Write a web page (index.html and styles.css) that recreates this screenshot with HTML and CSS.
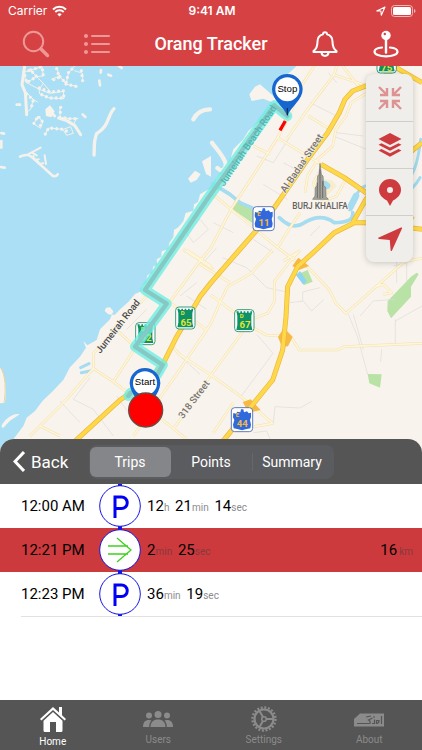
FILE: index.html
```html
<!DOCTYPE html>
<html lang="en">
<head>
<meta charset="UTF-8" />
<meta name="viewport" content="width=device-width, initial-scale=1" />
<title>Orang Tracker</title>
<link rel="stylesheet" href="styles.css">
</head>
<body>
  <header class="topbar">
    <div class="status">
      <div class="carrier">Carrier
        <svg width="15" height="12" viewBox="0 0 15 12" fill="none" stroke="#fff" stroke-width="2"><path d="M1 4.500a9.200 9.200 0 0 1 13 0M3.300 7a6 6 0 0 1 8.400 0"/><path d="M7.500 11.500 5.300 9.200a3.200 3.200 0 0 1 4.400 0z" fill="#fff" stroke="none"/></svg>
      </div>
      <div class="clock">9:41 AM</div>
      <div class="battery">
        <svg width="10" height="10" viewBox="0 0 10 10" fill="none" stroke="#fff" stroke-width="1.100" stroke-linejoin="round"><path d="M.8 4.900 9 1 5.300 9.300 4.900 5z"/></svg>
        <svg width="25" height="12" viewBox="0 0 25 12"><rect x=".5" y=".5" width="21" height="11" rx="3" fill="none" stroke="#f0b5b5"/><rect x="2" y="2" width="18" height="8" rx="1.500" fill="#fff"/><path d="M23 4c2 .7 2 3.300 0 4z" fill="#f0b5b5"/></svg>
      </div>
    </div>
    <nav class="navbar">
      <div class="nav-group">
        <button type="button" class="icon-btn faded" aria-label="Search">
          <svg width="28" height="28" viewBox="0 0 28 28" fill="none" stroke="currentColor"><circle cx="11.500" cy="11.500" r="9.700" stroke-width="2"/><path d="m19 19 6.500 6.500" stroke-width="3.400" stroke-linecap="round"/></svg>
        </button>
        <button type="button" class="icon-btn faded" aria-label="List">
          <svg width="28" height="28" viewBox="0 0 28 28" fill="none" stroke="currentColor" stroke-width="2" stroke-linecap="round"><path d="M9 6h17M9 14h17M9 22h17"/><g fill="currentColor" stroke="none"><circle cx="3" cy="6" r="2"/><circle cx="3" cy="14" r="2"/><circle cx="3" cy="22" r="2"/></g></svg>
        </button>
      </div>
      <h1 class="title">Orang Tracker</h1>
      <div class="nav-group nav-right">
        <button type="button" class="icon-btn" aria-label="Notifications">
          <svg width="28" height="28" viewBox="0 0 28 28" fill="none" stroke="currentColor" stroke-width="2" stroke-linecap="round" stroke-linejoin="round"><path d="M12 4.300a2 2 0 1 1 4 0c3.700 1 5.500 4 5.500 7.200 0 5.500 1 7.500 4 9.500v1h-23v-1c3-2 4-4 4-9.500C6.500 8.300 8.300 5.300 12 4.300z"/><path d="M10.500 22.500c.3 4.500 6.700 4.500 7 0"/></svg>
        </button>
        <button type="button" class="icon-btn" aria-label="Track position">
          <svg width="28" height="28" viewBox="0 0 28 28" fill="none" stroke="currentColor"><circle cx="14" cy="5.500" r="4.700" fill="currentColor" stroke="none"/><circle cx="12.800" cy="4" r="1.200" fill="#d64244" stroke="none"/><path d="M14 9v13.500" stroke-width="2.400" stroke-linecap="round"/><path d="M10 17.500c-4.500.4-7.500 2-7.500 4.200 0 2.700 5 4.600 11.500 4.600s11.500-1.900 11.500-4.600c0-2.200-3-3.800-7.500-4.200" stroke-width="2.200" stroke-linecap="round"/></svg>
        </button>
      </div>
    </nav>
  </header>

  <section class="map" aria-label="Map">
    <svg class="map-canvas" viewBox="0 0 1266 1167" preserveAspectRatio="xMidYMin slice">
      <defs>
        <g id="d-road">
          <rect x="-29" y="-33" width="58" height="66" rx="10" fill="#fff" stroke="#3a9b7d" stroke-width="3"/>
          <path d="M-24-28h7v4h5v-4h5v4h5v-4h5v4h5v-4h5v4h5v-4h6l-3 14v28l3 14h-48l3-14v-28z" fill="#0d9166"/>
        </g>
        <g id="e-road">
          <rect x="-32" y="-36" width="64" height="72" rx="10" fill="#fff" stroke="#6079b8" stroke-width="3"/>
          <path d="M-26-20l8 2 4-6 9 2 2-9h7l2 9 9-3 5 6 7-2v14l-3 8 3 14-2 11-14 3L0 32l-11-3-14-3-2-11 4-14-4-8z" fill="#3069dc"/>
        </g>
      </defs>

      <rect width="1266" height="1167" fill="#abdff5"/>

      <!-- mainland -->
      <path class="land" d="M890 0 866 22 842 50 846 108 820 110 790 98 755 105 748 85 765 62 780 55 820 90 834 108 800 140 785 160 745 195 730 220 700 250 690 285 668 320 650 335 641 365 622 372 600 385 594 408 582 415 580 434 557 441 550 466 535 484 522 492 520 514 508 530 505 550 485 556 484 572 470 580 472 597 459 602 457 620 442 628 438 650 426 660 424 676 405 684 385 708 362 728 345 746 325 745 314 735 318 725 330 724 340 736 330 760 300 790 290 822 262 838 250 825 258 845 240 872 210 904 190 942 158 976 128 1004 105 1035 80 1055 70 1080 40 1120 10 1167H1266V0z"/>

      <!-- islands -->
      <g class="land-line">
        <path stroke-width="13" d="M636 230c14 20 36 40 42 66-4 22-16 20-26 10M580 160c10-20 30-30 50-30"/>
        <path stroke-width="10" d="M342 128c-20 20-12 50-52 75-10 24-6 42-8 64"/>
        <path stroke-width="8" d="M60 272c20-10 30-5 40 5l58 52c10 4 12 0 15-4"/>
        <path stroke-width="6" d="M84 265l38-20M100 270l4 12 12-2M112 285l6 9 12-2M134 268l4 26M96 260l14 8"/>
        <path stroke-width="9" d="M74 0 66 56l10 24 4 66M144 130l20 20M176 156l24 8 24 14 18 28"/>
        <path stroke-width="3" d="M72 18l20-6 18 20-30 18zM92 12l34-10 4 28-20 2M110 32l20 20-12 18-38-20M118 70l32 12 40-6 2 22-44-2-28-12zM80 80l20 20-8 30-14 10M100 100l12 8M130 52l24 28M170 4l8 26-24 10M178 30l20 24 8-34 18-20M198 54l34 8M224 14l24 8v22M102 172l12-22 14 18-6 18zM136 204l10-18 44 4 22-8 8 20-20 6-10-16M180 124v30l30 4M210 158l24 0M222 172l8-16"/>
        <path stroke-width="10" stroke-dasharray="0 15" d="M72 18l20-6 18 20-30 18zM92 12l34-10 4 28M118 66l32 12 40-4 2 22-44 0-28-12M80 84l20 18-8 30M170 8l8 26-24 10M180 32l18 20 8-34 18-16M198 54l34 8M244 14l4 30M102 172l12-22 14 18-12 18M136 204l10-18 44 4 22 12M182 124l-2 30 30 4 24 0"/>
        <path stroke-width="8" d="M248 145l8 8M50 116h10M303 12l-1 8M298 44l2 14M325 26l8 3M357 0l8 6M4 225v20M4 201l8 2M2 303l12 2M150 130l0 8"/>
      </g>
      <path class="land" d="M564 338 585 314 602 324 590 342 572 350zM606 286 633 270 633 332 618 324zM136 130 150 118 164 136 154 154 138 150zM0 905c16 20 20 60 15 105l-15 2zM4 1080c10-20 35-40 55-35l-30 20-20 22z"/>
      <path d="M4 905q18 40 8 108" fill="none" stroke="#f0d49a" stroke-width="3"/>

      <!-- parks and inland water -->
      <g fill="#b8e2a6">
        <path d="M703 405 758 430V472L698 430zM1163 705 1233 632 1250 620 1256 625 1233 662V692L1173 757 1162 735zM1103 924 1145 925 1140 965 1108 952zM888 627 923 612 938 647 913 657z"/>
        <path d="M955 345q40-15 55 15l-35 35z" fill="#f7edcc"/>
      </g>
      <path d="M888 627 900 615 920 646 910 656z" fill="#8fd4f0"/>
      <g fill="none" stroke="#a5dcf0" stroke-linecap="round" stroke-linejoin="round">
        <path stroke-width="11" d="M636 352 690 385 720 410 755 425M838 455q40 40 75 15 50-30 90 0 60 0 55-30"/>
        <path stroke-width="20" d="M1050 425 1068 390M975 355l6 4"/>
        <path stroke-width="9" d="M1068 390q10-24 28-30M1210 385q30-15 50-50M1232 330q20-25 30-110M242 905l25-12M244 920l30-6"/>
      </g>

      <!-- lanes -->
      <g class="lane">
        <path d="M640 360 700 290M770 270 820 290 868 215M790 355 862 400M905 320 850 290M930 110 1010 150M1000 210 1100 250M1010 200 1090 210M668 575 740 605 800 665 870 680M870 710 910 705 935 735 972 700M908 705V678L960 665M1045 745 1072 810 1103 925M1060 745 1090 850M1080 750 1120 705 1185 700M1186 760V840M1145 850 1142 888M1186 765 1266 720M770 805 819 862 724 990M820 1070 825 1022 900 1026 935 1006M400 1060 350 990M270 935 220 1000 280 1030 340 1110M180 1005 240 1070M380 790 440 730M540 870 600 925M560 690 620 730M540 690 590 650M1145 560 1190 540V650M1180 600 1220 590V650M760 1100 800 1095 815 1130"/>
        <path d="M560 500 600 460 625 490 580 530zM550 550 610 590 650 545M640 470 700 500M760 520 820 560M930 510l30-30M985 20l25 30"/>
      </g>

      <!-- secondary roads -->
      <g class="road-case">
        <path d="M943 0 905 58 868 150 833 215 693 430 633 545 595 592 400 855 340 947M833 215 963 295M1010 0 1003 25 923 130 860 220M998 25 1103 60M1028 0 1083 70M1103 80 1053 110 1038 150 1008 190 998 240 953 280 923 330 915 380M925 150 990 190M550 550 640 610M760 240 810 265M958 320 940 350 960 410 1010 390 1040 335"/>
        <path d="M633 380 693 430 773 495 833 545 893 590 923 602 988 672 1008 712 1038 742 1128 662 1213 587 1266 577M633 687 693 732 763 787 798 807 873 812 898 852 1013 852 1033 842 1266 832M818 552 753 622 683 662 663 702 633 772 540 910 440 1052 400 1110M900 552 873 582 823 647 823 707 803 742 763 757M728 797 633 927 520 1090M540 867 633 927 723 992 818 1072 763 1082M633 600 560 552M600 595 690 650M700 1010 640 1100M450 680 280 862 280 907 200 1000 90 1110M280 907 340 947 450 1032 560 1120M500 702 620 792 600 822M350 792 405 842M520 845 540 867M833 545 860 500 900 440M120 1080 180 1110M890 560 850 585M1128 662 1150 655 1175 680 1150 685"/>
      </g>
      <g class="road">
        <path d="M943 0 905 58 868 150 833 215 693 430 633 545 595 592 400 855 340 947M833 215 963 295M1010 0 1003 25 923 130 860 220M998 25 1103 60M1028 0 1083 70M1103 80 1053 110 1038 150 1008 190 998 240 953 280 923 330 915 380M925 150 990 190M550 550 640 610M760 240 810 265M958 320 940 350 960 410 1010 390 1040 335"/>
        <path d="M633 380 693 430 773 495 833 545 893 590 923 602 988 672 1008 712 1038 742 1128 662 1213 587 1266 577M633 687 693 732 763 787 798 807 873 812 898 852 1013 852 1033 842 1266 832M818 552 753 622 683 662 663 702 633 772 540 910 440 1052 400 1110M900 552 873 582 823 647 823 707 803 742 763 757M728 797 633 927 520 1090M540 867 633 927 723 992 818 1072 763 1082M633 600 560 552M600 595 690 650M700 1010 640 1100M450 680 280 862 280 907 200 1000 90 1110M280 907 340 947 450 1032 560 1120M500 702 620 792 600 822M350 792 405 842M520 845 540 867M833 545 860 500 900 440M120 1080 180 1110M890 560 850 585M1128 662 1150 655 1175 680 1150 685"/>
      </g>

      <!-- highways -->
      <path d="M852 785l-18 28 12 30 18-2 14-28zM752 1000l-24 8 18 32 36-8zM895 575l-18 25 20 12 30-12z" fill="#f7b944"/>
      <g class="highway-case">
        <path d="M218 1132 360 1002 390 982 440 950 490 892 530 812 600 692 633 650 718 552 768 495 823 425 923 280 983 200 1018 140 1035 100 1058 75 1103 58 1150 35 1190 0M963 295 1033 335 1098 380 1240 460M1058 470 1098 400 1180 300 1266 230M1180 0 1266 50"/>
        <path d="M665 1130 753 1022 818 942 848 852 858 752 863 662 893 602 948 552 1003 500 1063 470 1110 470 1266 490"/>
      </g>
      <g class="highway">
        <path d="M218 1132 360 1002 390 982 440 950 490 892 530 812 600 692 633 650 718 552 768 495 823 425 923 280 983 200 1018 140 1035 100 1058 75 1103 58 1150 35 1190 0M963 295 1033 335 1098 380 1240 460M1058 470 1098 400 1180 300 1266 230M1180 0 1266 50"/>
        <path d="M665 1130 753 1022 818 942 848 852 858 752 863 662 893 602 948 552 1003 500 1063 470 1110 470 1266 490"/>
      </g>

      <!-- Burj Khalifa -->
      <path d="M960 292 964 325 969 330 971 360 977 364 978 392 985 400H938L945 390 946 364 951 360 953 330 957 325z" fill="#a5a39d" stroke="#777570" stroke-width="2"/>
      <path d="M960 310V398M968 345V396M952 350V396" stroke="#6d6b67" stroke-width="3"/>

      <!-- labels -->
      <text class="place" x="960" y="429">BURJ KHALIFA</text>
      <text class="street" transform="translate(856 382) rotate(-56)">Al Badaa' Street</text>
      <text class="street dark" transform="translate(301 864) rotate(-52)">Jumeirah Road</text>
      <text class="street" transform="translate(549 1060) rotate(-53)">318 Street</text>

      <!-- road shields -->
      <g class="shield">
        <use href="#d-road" x="1160" y="-12"/><text x="1160" y="14">75</text>
        <use href="#d-road" x="556" y="756"/><text class="letter" x="548" y="747">D</text><text x="558" y="779">65</text>
        <use href="#d-road" x="436" y="803"/><text class="letter" x="428" y="794">D</text><text x="438" y="826">92</text>
        <use href="#d-road" x="733" y="764"/><text class="letter" x="725" y="755">D</text><text x="735" y="787">67</text>
      </g>
      <g class="shield orange">
        <use href="#e-road" x="791" y="458"/><text class="letter" x="777" y="449">E</text><text x="792" y="481">11</text>
        <use href="#e-road" x="726" y="1061"/><text class="letter" x="712" y="1052">E</text><text x="727" y="1084">44</text>
      </g>

      <!-- travelled route -->
      <path class="route-glow" d="M862 150 823 118 620 402 435 672 500 713 405 842 488 897 472 925M385 990 392 980"/>
      <path class="route" d="M862 150 823 118 620 402 435 672 500 713 405 842 488 897 472 925M385 990 392 980"/>
      <text class="street on-route" transform="translate(672 362) rotate(-56)">Jumeirah Beach Road</text>
      <path d="M856 165 840 193" stroke="#fb0007" stroke-width="10"/>

      <!-- markers -->
      <path d="M862 150C850 120 816 102 816 70a46 46 0 0 1 92 0C908 102 874 120 862 150z" fill="#1766cf"/>
      <circle cx="862" cy="70" r="36" fill="#fff"/>
      <path d="M862 126v22" stroke="#123" stroke-width="3"/>
      <text class="pin-label" x="862" y="79">Stop</text>
      <path d="M435 1042C425 1012 390 985 389 952a46 46 0 0 1 92 0C480 985 445 1012 435 1042z" fill="#1766cf"/>
      <circle cx="435" cy="952" r="36" fill="#fff"/>
      <text class="pin-label" x="435" y="958">Start</text>
      <circle cx="437" cy="1032" r="51" fill="#fe0000" stroke="#6b4a45" stroke-width="4"/>
    </svg>

    <div class="map-tools">
      <button type="button" class="tool" aria-label="Fit to route">
        <svg class="dim" width="24" height="24" viewBox="0 0 24 24" fill="none" stroke="currentColor" stroke-width="2.400"><path d="M1 1l7 7M9 2v7H2M23 1l-7 7M15 2v7h7M1 23l7-7M9 22v-7H2M23 23l-7-7M15 22v-7h7"/></svg>
      </button>
      <button type="button" class="tool" aria-label="Layers">
        <svg width="26" height="26" viewBox="0 0 26 26" fill="currentColor"><path d="M13 1 24.500 7 13 13 1.500 7zM4.500 11.200 13 15.500l8.500-4.300 3 1.600L13 18.800 1.500 12.800zM4.500 17 13 21.300 21.500 17l3 1.600L13 24.800 1.500 18.600z"/></svg>
      </button>
      <button type="button" class="tool" aria-label="Places">
        <svg width="28" height="28" viewBox="0 0 28 28" fill="currentColor" fill-rule="evenodd"><path d="M14 1a11 11 0 0 0-11 11c0 5 4 8.500 8 10.500L14 28l3-5.500c4-2 8-5.500 8-10.500A11 11 0 0 0 14 1zm0 8a3 3 0 1 1 0 6 3 3 0 0 1 0-6z"/></svg>
      </button>
      <button type="button" class="tool" aria-label="My location">
        <svg width="26" height="26" viewBox="0 0 26 26" fill="currentColor"><path d="M24 1.500c.8-.3 1.300.2 1 1L15 24.500c-.4.800-1.300.7-1.400-.2L12.800 14 2 13c-1-.1-1-1-.2-1.400z"/></svg>
      </button>
    </div>
  </section>

  <section class="panel" aria-label="Trip history">
    <div class="panel-head">
      <button type="button" class="back">
        <svg width="12" height="21" viewBox="0 0 12 21" fill="none" stroke="#fff" stroke-width="3"><path d="M11 1 2 10.500 11 20"/></svg>
        Back
      </button>
      <div class="segments" role="tablist">
        <button type="button" class="segment active" role="tab" aria-selected="true">Trips</button>
        <button type="button" class="segment" role="tab" aria-selected="false">Points</button>
        <button type="button" class="segment divided" role="tab" aria-selected="false">Summary</button>
      </div>
    </div>
    <ul class="trips">
      <li class="trip">
        <time>12:00 AM</time>
        <svg class="trip-icon" viewBox="0 0 42 44" fill="none" stroke="#1414e0"><path d="M21 0v2M21 42v2" stroke-width="4"/><circle cx="21" cy="22" r="20.300" fill="#fff"/><path d="M16 34V13h6.500a5.700 5.700 0 0 1 0 11.500H16" stroke="#0000f5" stroke-width="3"/></svg>
        <span>12<small>h</small> 21<small>min</small> 14<small>sec</small></span>
      </li>
      <li class="trip selected">
        <time>12:21 PM</time>
        <svg class="trip-icon" viewBox="0 0 42 44" fill="none" stroke="#1414e0"><path d="M21 0v2M21 42v2" stroke-width="4"/><circle cx="21" cy="22" r="20.300" fill="#fff"/><path d="M9 18h20M9 26h20M18 10l14 12-14 12" stroke="#3cd21c" stroke-width="1.300"/></svg>
        <span>2<small>min</small> 25<small>sec</small></span>
        <span class="distance">16<small>km</small></span>
      </li>
      <li class="trip">
        <time>12:23 PM</time>
        <svg class="trip-icon" viewBox="0 0 42 44" fill="none" stroke="#1414e0"><path d="M21 0v2M21 42v2" stroke-width="4"/><circle cx="21" cy="22" r="20.300" fill="#fff"/><path d="M16 34V13h6.500a5.700 5.700 0 0 1 0 11.500H16" stroke="#0000f5" stroke-width="3"/></svg>
        <span>36<small>min</small> 19<small>sec</small></span>
      </li>
    </ul>
  </section>

  <nav class="tabbar">
    <a href="#home" class="tab current">
      <svg width="28" height="28" viewBox="0 0 28 28" fill="currentColor"><path d="M14 1 1 13l1.400 1.600L14 4l11.600 10.600L27 13l-4-3.700V1h-3v5.500z"/><path d="M14 6 4.500 14.700V24.500q0 1.500 1.500 1.500h5V16h6v10h5q1.500 0 1.500-1.500v-9.800z"/></svg>
      Home
    </a>
    <a href="#users" class="tab">
      <svg width="30" height="26" viewBox="0 0 30 26" fill="currentColor"><circle cx="15" cy="8.500" r="3.500"/><circle cx="6" cy="9.500" r="3"/><circle cx="24" cy="9.500" r="3"/><path d="M7.500 21c0-5 3-7.500 7.500-7.500s7.500 2.500 7.500 7.500zM0 21c0-4.500 2-7 6-7 1 0 2 .2 2.500.5C7 16 6.200 18 6.200 21zM30 21c0-4.500-2-7-6-7-1 0-2 .2-2.500.5 1.500 1.500 2.300 3.500 2.300 6.500z"/></svg>
      Users
    </a>
    <a href="#settings" class="tab">
      <svg width="26" height="26" viewBox="0 0 26 26" fill="none" stroke="currentColor"><circle cx="13" cy="13" r="11.500" stroke-width="2.400" stroke-dasharray="2 1.610"/><circle cx="13" cy="13" r="9.500" stroke-width="2.200"/><circle cx="13" cy="13" r="2.300" stroke-width="1.600"/><path d="M15 13h7M12 11 8.500 5M12 15 8.500 21" stroke-width="2"/></svg>
      Settings
    </a>
    <a href="#about" class="tab">
      <svg width="30" height="26" viewBox="0 0 30 26"><path d="M0 20.500V13L6 7.500h24v13z" fill="currentColor"/><g fill="none" stroke="#555" stroke-width="1.200"><path d="M3 17.500h12c2 0 1.500-2.500-.5-3.500l4-2M18 17.500h2.500v-4M25 14.500h-2.500v3c2.500 0 2.500-1.500 2.500-3zM27.500 10v8M12 11l5-1M19 11h2"/></g></svg>
      About
    </a>
  </nav>

  <script>
    const segments = document.querySelectorAll('.segment');
    segments.forEach(segment => {
      segment.addEventListener('click', () => {
        segments.forEach(s => {
          s.classList.toggle('active', s === segment);
          s.setAttribute('aria-selected', s === segment);
        });
      });
    });
  </script>
</body>
</html>
```
FILE: styles.css
```css
* {
  box-sizing: border-box;
}

body {
  margin: 0;
  min-height: 100vh;
  display: flex;
  flex-direction: column;
  font-family: Roboto, sans-serif;
  background: #fff;
  color: #000;
}

button {
  font: inherit;
  color: inherit;
  background: none;
  border: none;
  padding: 0;
  cursor: pointer;
}

svg {
  display: block;
}

/* header */
.topbar {
  background: #d64244;
  color: #fff;
}

.status,
.navbar {
  display: grid;
  grid-template-columns: 1fr auto 1fr;
  align-items: center;
}

.status {
  height: 21px;
  padding: 0 6px 0 8px;
  font-family: Inter, sans-serif;
  font-size: 12px;
}

.carrier,
.battery {
  display: flex;
  align-items: center;
  gap: 5px;
}

.battery {
  justify-content: flex-end;
}

.clock {
  font-weight: 600;
}

.navbar {
  height: 45px;
  padding: 0 22px;
}

.nav-group {
  display: flex;
  gap: 33px;
}

.nav-right {
  justify-content: flex-end;
}

.icon-btn.faded {
  color: #ee9896;
}

.title {
  margin: 0;
  font-size: 18px;
  font-weight: 500;
}

/* map */
.map {
  position: relative;
  flex: 1;
  min-height: 320px;
  margin-bottom: -16px;
  overflow: hidden;
}

.map-canvas {
  position: absolute;
  width: 100%;
  height: 100%;
}

.land {
  fill: #f8f4ed;
}

.land-line {
  fill: none;
  stroke: #f5f2ec;
  stroke-linecap: round;
  stroke-linejoin: round;
}

.lane {
  fill: none;
  stroke: #dedad8;
  stroke-width: 2;
}

.road-case,
.road,
.highway-case,
.highway {
  fill: none;
  stroke-linejoin: round;
}

.road-case {
  stroke: #f3dfb4;
  stroke-width: 8;
}

.road {
  stroke: #fef6d6;
  stroke-width: 5;
}

.highway-case {
  stroke: #eeb445;
  stroke-width: 15;
}

.highway {
  stroke: #fdd947;
  stroke-width: 11;
}

.route-glow,
.route {
  fill: none;
  stroke-linecap: round;
  stroke-linejoin: round;
}

.route-glow {
  stroke: #6eeee2;
  stroke-opacity: 0.8;
  stroke-width: 30;
}

.route {
  stroke: #86c8c3;
  stroke-width: 13;
}

.street {
  font-size: 29px;
  font-weight: 500;
  fill: #77736f;
  paint-order: stroke;
  stroke: #f8f4ed;
  stroke-width: 4px;
}

.street.dark {
  fill: #4a4a4a;
}

.street.on-route {
  fill: #4fb5b2;
  stroke: none;
}

.place {
  font-size: 25px;
  font-weight: 500;
  fill: #65625f;
  text-anchor: middle;
  paint-order: stroke;
  stroke: #f8f4ed;
  stroke-width: 4px;
}

.shield {
  font-size: 29px;
  font-weight: 700;
  fill: #e2e432;
  text-anchor: middle;
}

.shield.orange {
  fill: #f5b83c;
}

.shield .letter {
  font-size: 18px;
}

.pin-label {
  font-family: "Liberation Sans", sans-serif;
  font-size: 29px;
  text-anchor: middle;
}

.map-tools {
  position: absolute;
  top: 8px;
  right: 9px;
  display: flex;
  flex-direction: column;
  width: 47px;
  background: #efeeea;
  border-radius: 8px;
  box-shadow: 0 1px 6px rgba(0,0,0,0.2);
  color: #ce3b3f;
}

.tool {
  height: 47px;
  display: flex;
  justify-content: center;
  align-items: center;
}

.tool + .tool {
  border-top: 1px solid #cfcecb;
}

.dim {
  opacity: 0.5;
}

/* trips panel */
.panel {
  position: relative;
  min-height: 261px;
  background: #fff;
  border-radius: 14px 14px 0 0;
  overflow: hidden;
}

.panel-head {
  display: grid;
  grid-template-columns: 1fr auto 1fr;
  align-items: center;
  height: 45px;
  padding: 0 13px;
  background: #555;
  color: #fff;
}

.back {
  display: flex;
  align-items: center;
  gap: 6px;
  font-size: 17px;
}

.segments {
  display: grid;
  grid-template-columns: repeat(3, 81px);
  padding: 2px 1px;
  background: #5b5c5f;
  border-radius: 8px;
}

.segment {
  position: relative;
  height: 30px;
  border-radius: 6px;
  font-size: 14px;
}

.segment.active {
  background: #858689;
}

.segment.divided::before {
  content: "";
  position: absolute;
  left: 0;
  top: 6px;
  bottom: 6px;
  width: 1px;
  background: #66676a;
}

.trips {
  list-style: none;
  margin: 0;
  padding: 0;
}

.trip {
  display: grid;
  grid-template-columns: 78px 42px 1fr auto;
  align-items: center;
  padding: 0 9px 0 21px;
  font-size: 15px;
}

.trip span {
  padding-left: 6px;
}

.trip small {
  font-size: 10px;
  color: #8c8c8f;
}

.trip small:not(:last-child) {
  margin-right: 2px;
}

.trip.selected {
  background: #cd3a3e;
}

.trip.selected small {
  color: #87393c;
}

.distance small {
  margin-left: 2px;
}

.trips::after {
  content: "";
  display: block;
  height: 1px;
  margin-left: 21px;
  background: #e2e2e4;
}

/* bottom tabs */
.tabbar {
  display: grid;
  grid-template-columns: repeat(4, 1fr);
  height: 50px;
  background: #555;
}

.tab {
  display: flex;
  flex-direction: column;
  align-items: center;
  padding-top: 6px;
  gap: 2px;
  font-size: 10px;
  line-height: 12px;
  color: #8b8b8b;
  text-decoration: none;
}

.tab.current {
  color: #fff;
}
```
